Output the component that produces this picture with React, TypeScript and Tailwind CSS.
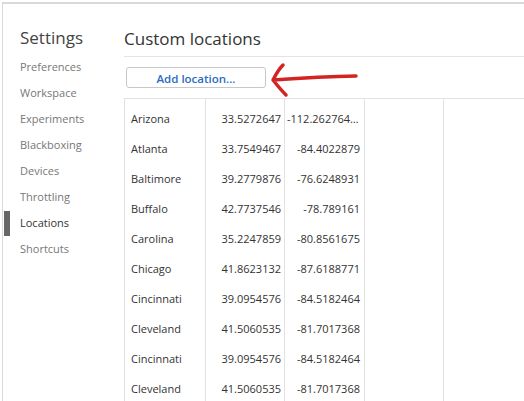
import React from 'react';

const locations = [
  { name: 'Arizona', lat: '33.5272647', lon: '-112.2627648379' },
  { name: 'Atlanta', lat: '33.7549467', lon: '-84.4022879' },
  { name: 'Baltimore', lat: '39.2779876', lon: '-76.6248931' },
  { name: 'Buffalo', lat: '42.7737546', lon: '-78.789161' },
  { name: 'Carolina', lat: '35.2247859', lon: '-80.8561675' },
  { name: 'Chicago', lat: '41.8623132', lon: '-87.6188771' },
  { name: 'Cincinnati', lat: '39.0954576', lon: '-84.5182464' },
  { name: 'Cleveland', lat: '41.5060535', lon: '-81.7017368' },
  { name: 'Cincinnati', lat: '39.0954576', lon: '-84.5182464' },
  { name: 'Cleveland', lat: '41.5060535', lon: '-81.7017368' },
];

const navItems = [
  'Preferences',
  'Workspace',
  'Experiments',
  'Blackboxing',
  'Devices',
  'Throttling',
  'Locations',
  'Shortcuts',
];

export default function App() {
  const selected = 'Locations';

  return (
    <div className="relative h-[401px] w-full overflow-hidden bg-white pl-[2px] pt-[2px] font-['Open_Sans',sans-serif]">
      <div className="flex h-full border-l border-t-2 border-[#d9d9d9]">
        {/* sidebar */}
        <div className="w-[121px] shrink-0">
          <h1 className="pl-[17px] pt-[22px] text-[17px] leading-[24px] text-[#444]">Settings</h1>
          <div className="mt-[4px]">
            {navItems.map(item => (
              <div key={item} className="flex h-[26px] items-center">
                <span className={`ml-[1px] h-[25px] w-[6px] ${item === selected ? 'bg-[#666]' : ''}`} />
                <span className={`ml-[10px] text-[11px] ${item === selected ? 'text-[#333]' : 'text-[#777]'}`}>
                  {item}
                </span>
              </div>
            ))}
          </div>
        </div>

        {/* content */}
        <div className="flex min-w-0 flex-1 flex-col">
          <h2 className="border-b border-[#e4e4e4] pb-[5px] pt-[23px] text-[17px] leading-[24px] text-[#333]">
            Custom locations
          </h2>
          <button className="ml-[2px] mt-[10px] h-[24px] w-[140px] rounded-[3px] border border-[#c8c8c8] bg-white pt-[2px] text-[11.5px] font-semibold text-[#2b6cc4]">
            Add location...
          </button>
          <div className="mt-[10px] flex flex-1 border-l border-t border-[#e2e2e2] text-[11px] text-[#333]">
            <div className="w-[81px] border-r border-[#e2e2e2] pt-[5px]">
              {locations.map((loc, i) => (
                <div key={i} className="flex h-[30px] items-center pl-[6px]">{loc.name}</div>
              ))}
            </div>
            <div className="w-[79px] border-r border-[#e2e2e2] pt-[5px]">
              {locations.map((loc, i) => (
                <div key={i} className="h-[30px] pr-[3px] text-right leading-[30px]">{loc.lat}</div>
              ))}
            </div>
            <div className="w-[80px] border-r border-[#e2e2e2] pt-[5px]">
              {locations.map((loc, i) => (
                <div key={i} className="h-[30px] truncate pl-[2px] pr-[4px] text-right leading-[30px]">{loc.lon}</div>
              ))}
            </div>
            <div className="w-[79px] border-r border-[#e2e2e2]" />
            <div className="flex-1" />
          </div>
        </div>
      </div>

      {/* red annotation arrow */}
      <svg className="absolute left-[260px] top-[60px]" width="110" height="45" viewBox="0 0 110 45" fill="none">
        <path
          d="M96 16 C70 16.5 42 18 13 20 M13 20 C16 14 19 9 23 5 M13 20 C17 25 21 30 26 35"
          stroke="#d42323"
          strokeWidth="3.5"
          strokeLinecap="round"
          strokeLinejoin="round"
        />
      </svg>
    </div>
  );
}
